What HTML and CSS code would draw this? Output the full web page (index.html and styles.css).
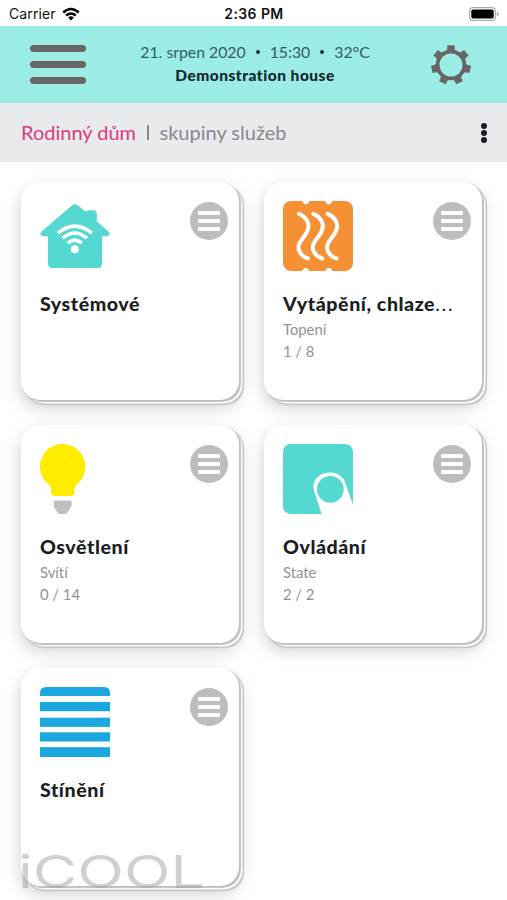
FILE: index.html
```
<!DOCTYPE html>
<html lang="cs">
  <head>
    <meta charset="UTF-8" />
    <meta name="viewport" content="width=device-width, initial-scale=1.0" />
    <title>iCOOL</title>
    <link rel="stylesheet" href="styles.css">
  </head>
  <body>
    <div class="status-bar">
      <div class="carrier">
        <span>Carrier</span>
        <svg class="wifi" viewBox="0 0 18 14">
          <path d="M0.4 4.6Q9-3.1 17.6 4.6L15.9 6.4Q9 .3 2.1 6.4Z" />
          <path d="M3.3 7.6Q9 2.8 14.7 7.6L13 9.4Q9 5.9 5 9.4Z" />
          <path d="M6.1 10.5Q9 8.2 11.9 10.5L9 13.5Z" />
        </svg>
      </div>
      <span class="clock">2:36 PM</span>
      <svg class="battery" viewBox="0 0 30 14">
        <rect x=".7" y=".7" width="25.6" height="12.6" rx="3.4" fill="#fff" stroke="#aaa" stroke-width="1.2" />
        <rect x="2.3" y="2.4" width="22.4" height="9.2" rx="1.8" />
        <path d="M27.8 4.8Q29.8 5.4 29.8 7T27.8 9.2Z" fill="#aaa" />
      </svg>
    </div>

    <header class="header">
      <button class="menu" aria-label="Menu"><span></span><span></span><span></span></button>
      <div class="header-info">
        <div class="date">
          <span>21. srpen 2020</span><i class="dot"></i><span>15:30</span><i class="dot"></i><span>32°C</span>
        </div>
        <div class="house-name">Demonstration house</div>
      </div>
      <svg class="gear" viewBox="-20 -20 40 40">
        <defs>
          <path id="tooth" d="M-6-12.5L-3.8-15.5L-3.6-19.7H3.6L3.8-15.5L6-12.5Z" />
        </defs>
        <circle r="13.4" fill="none" stroke="#666" stroke-width="3.8" />
        <g fill="#666">
          <use href="#tooth" />
          <use href="#tooth" transform="rotate(51.43)" />
          <use href="#tooth" transform="rotate(102.86)" />
          <use href="#tooth" transform="rotate(154.29)" />
          <use href="#tooth" transform="rotate(205.71)" />
          <use href="#tooth" transform="rotate(257.14)" />
          <use href="#tooth" transform="rotate(308.57)" />
        </g>
      </svg>
    </header>

    <nav class="breadcrumb">
      <span class="current">Rodinný dům</span>
      <i class="divider"></i>
      <span class="group">skupiny služeb</span>
      <div class="more"><i></i><i></i><i></i></div>
    </nav>

    <main class="cards">
      <div class="card">
        <div class="card-top">
          <svg class="icon" viewBox="0 0 70 70">
            <path fill="#55d8d1" d="M31.5 4.7Q35 2 38.5 4.7L45 10.2Q46 9.8 47 9.9Q48 9.2 50 9.2H53Q56.8 9.2 56.8 13V20.3L69 31Q71 34.5 67.2 35.2H62V62.5Q62 67 57.5 67H12.5Q8 67 8 62.5V35.2H3Q-1 34.6 1 31Z" />
            <g fill="none" stroke="#fff" stroke-width="3.6">
              <path d="M17.8 32.2Q34.8 18.2 51.8 32.2" />
              <path d="M22.7 37.2Q34.8 26.8 46.9 37.2" />
              <path d="M27.7 42.2Q34.8 36 41.9 42.2" />
            </g>
            <circle cx="34.8" cy="48.3" r="4" fill="#fff" />
          </svg>
          <button class="card-menu" aria-label="Menu"><i></i><i></i><i></i></button>
        </div>
        <h2>Systémové</h2>
      </div>

      <div class="card">
        <div class="card-top">
          <svg class="icon" viewBox="0 0 70 70">
            <rect width="70" height="70" rx="8" fill="#f69035" />
            <g fill="#fff">
              <path d="M19.5-1H26V1.2L24 3.2H21.6L19.5 1Z" />
              <path d="M42.5-1H49V1L47 3.2H44.6L42.5 1Z" />
              <path d="M19.5 71V69L21.6 67H24L26 69V71Z" />
              <path d="M42.5 71V69L44.6 67H47L49 69V71Z" />
            </g>
            <g fill="none" stroke="#fff" stroke-width="4" stroke-linecap="round">
              <path d="M16 12.8C23.5 16 28 23 24 31C20.5 38 13.5 42 16 49.5Q18.5 55.5 25 57.5" />
              <path d="M30.3 12.8C37.8 16 42.3 23 38.3 31C34.8 38 27.8 42 30.3 49.5Q32.8 55.5 39.3 57.5" />
              <path d="M44.6 12.8C52.1 16 56.6 23 52.6 31C49.1 38 42.1 42 44.6 49.5Q47.1 55.5 53.6 57.5" />
            </g>
          </svg>
          <button class="card-menu" aria-label="Menu"><i></i><i></i><i></i></button>
        </div>
        <h2>Vytápění, chlaze<span class="dots">...</span></h2>
        <p>Topení</p>
        <p>1 / 8</p>
      </div>

      <div class="card">
        <div class="card-top">
          <svg class="icon" viewBox="0 0 70 70">
            <path fill="#ffed00" d="M22.5 0C35 0 45.3 10 45.3 22.7C45.3 29.5 42.2 35 38.5 38.8Q34.5 42 34.5 45V48Q34.2 52 30 52H15.5Q11.2 52 11 48V45Q11 42 7 38.8C3 35 0 29.5 0 22.7C0 10 10 0 22.5 0Z" />
            <path fill="#bfbfbf" d="M15.5 56.5H29.7Q31.7 56.5 31.7 58.5V60.8Q31.5 63 29.7 64.8L27.5 68.5Q26.5 70 25 70H20Q18.5 70 17.5 68.5L15.2 64.8Q13.6 63 13.6 60.8V58.5Q13.6 56.5 15.5 56.5Z" />
          </svg>
          <button class="card-menu" aria-label="Menu"><i></i><i></i><i></i></button>
        </div>
        <h2>Osvětlení</h2>
        <p>Svítí</p>
        <p>0 / 14</p>
      </div>

      <div class="card">
        <div class="card-top">
          <svg class="icon" viewBox="0 0 70 70">
            <rect width="70" height="70" rx="8" fill="#55d8d1" />
            <path fill="#fff" d="M39 71L31.4 48C27.5 37 36 28.5 47 28.5C56 28.5 61.5 34 63 41L70.5 62V71Z" />
            <circle cx="47.3" cy="45.3" r="13.4" fill="#55d8d1" />
          </svg>
          <button class="card-menu" aria-label="Menu"><i></i><i></i><i></i></button>
        </div>
        <h2>Ovládání</h2>
        <p>State</p>
        <p>2 / 2</p>
      </div>

      <div class="card">
        <div class="card-top">
          <svg class="icon" viewBox="0 0 70 70" fill="#1ba7df">
            <path d="M0 9V6Q0 0 6 0H64Q70 0 70 6V9Z" />
            <rect y="15" width="70" height="9.2" />
            <rect y="30.7" width="70" height="9.2" />
            <rect y="45.3" width="70" height="9.2" />
            <rect y="60.2" width="70" height="9.8" />
          </svg>
          <button class="card-menu" aria-label="Menu"><i></i><i></i><i></i></button>
        </div>
        <h2>Stínění</h2>
      </div>
    </main>

    <svg class="brand" viewBox="0 0 200 60">
      <text x="-2" y="46" textLength="187" lengthAdjust="spacingAndGlyphs">iCOOL</text>
    </svg>
  </body>
</html>
```
FILE: styles.css
```
* {
  margin: 0;
  padding: 0;
  box-sizing: border-box;
}

body {
  height: 900px;
  overflow: hidden;
  background-color: #fff;
  color: #1b1e22;
  font-family: Lato, sans-serif;
  font-variant-ligatures: none;
}

button {
  border: none;
  background: none;
}

/* Status bar */

.status-bar {
  height: 26px;
  padding: 1px 8px 0 9px;
  display: grid;
  grid-template-columns: 1fr auto 1fr;
  align-items: center;
  font-family: Inter, sans-serif;
  font-size: 14px;
  color: #111;
}

.carrier {
  display: flex;
  align-items: center;
  gap: 6px;
  letter-spacing: 0.1px;
}

.wifi {
  width: 18px;
  height: 14px;
}

.clock {
  font-size: 14px;
  font-weight: 600;
  letter-spacing: 0.4px;
}

.battery {
  width: 30px;
  height: 14px;
  justify-self: end;
}

/* Header */

.header {
  height: 77px;
  padding: 0 36px 0 30px;
  display: flex;
  align-items: center;
  justify-content: space-between;
  background-color: #9aece5;
}

.menu {
  width: 56px;
  display: flex;
  flex-direction: column;
  gap: 9px;
}

.menu span {
  height: 7px;
  border-radius: 4px;
  background-color: #666;
}

.header-info {
  margin-right: 7px;
  padding-bottom: 3px;
  text-align: center;
}

.date {
  display: flex;
  align-items: center;
  font-size: 15.8px;
  line-height: 24px;
  color: #365b5e;
}

.dot {
  width: 4px;
  height: 4px;
  margin: 0 10px;
  border-radius: 50%;
  background-color: #163438;
}

.house-name {
  font-size: 15.5px;
  font-weight: 900;
  line-height: 23px;
  letter-spacing: 0.5px;
  color: #10272d;
}

.gear {
  width: 40px;
  height: 40px;
}

/* Breadcrumb */

.breadcrumb {
  height: 59px;
  padding: 0 20px 2px 21px;
  display: flex;
  align-items: center;
  font-size: 20px;
  background-color: #e9eaee;
}

.current {
  color: #dc3b7b;
}

.divider {
  width: 1.5px;
  height: 15px;
  margin: 1px 11px 0;
  background-color: #888;
}

.group {
  color: #85898c;
}

.more {
  padding-top: 2px;
  margin-left: auto;
  display: flex;
  flex-direction: column;
  gap: 1px;
}

.more i {
  width: 6px;
  height: 6px;
  border-radius: 50%;
  background-color: #1b1e22;
}

/* Cards */

.cards {
  padding: 20px 21px;
  display: grid;
  grid-template-columns: 218px 218px;
  gap: 25px;
}

.card {
  height: 218px;
  padding: 19px 11px 0 19px;
  border-radius: 19px;
  background-color: #fff;
  box-shadow: 1.5px 1.5px 1px #c0c0c0, 3.5px 3.5px 0 #fff, 4.5px 4.5px 1px #c4c4c4,
    0 7px 18px rgba(0, 0, 0, 0.2);
}

.card-top {
  display: flex;
  justify-content: space-between;
}

.icon {
  width: 70px;
  height: 70px;
}

.card-menu {
  width: 38px;
  height: 38px;
  margin-top: 1px;
  border-radius: 50%;
  background-color: #bdbdbd;
  display: flex;
  flex-direction: column;
  align-items: center;
  justify-content: center;
  gap: 4px;
}

.card-menu i {
  width: 22px;
  height: 4px;
  border-radius: 1px;
  background-color: #fff;
}

.card h2 {
  margin-top: 19px;
  font-size: 19.6px;
  font-weight: 900;
  line-height: 28px;
  letter-spacing: 0.55px;
  white-space: nowrap;
}

.dots {
  font-weight: 400;
  letter-spacing: 1.8px;
}

.card p {
  font-size: 14.8px;
  line-height: 22px;
  color: #909396;
}

/* Brand mark over the bottom of the list */

.brand {
  position: fixed;
  left: 20px;
  bottom: -2px;
  width: 200px;
  height: 60px;
  overflow: visible;
}

.brand text {
  font-family: Inter, sans-serif;
  font-size: 45px;
  font-weight: 400;
  fill: rgba(150, 150, 150, 0.45);
}
```
